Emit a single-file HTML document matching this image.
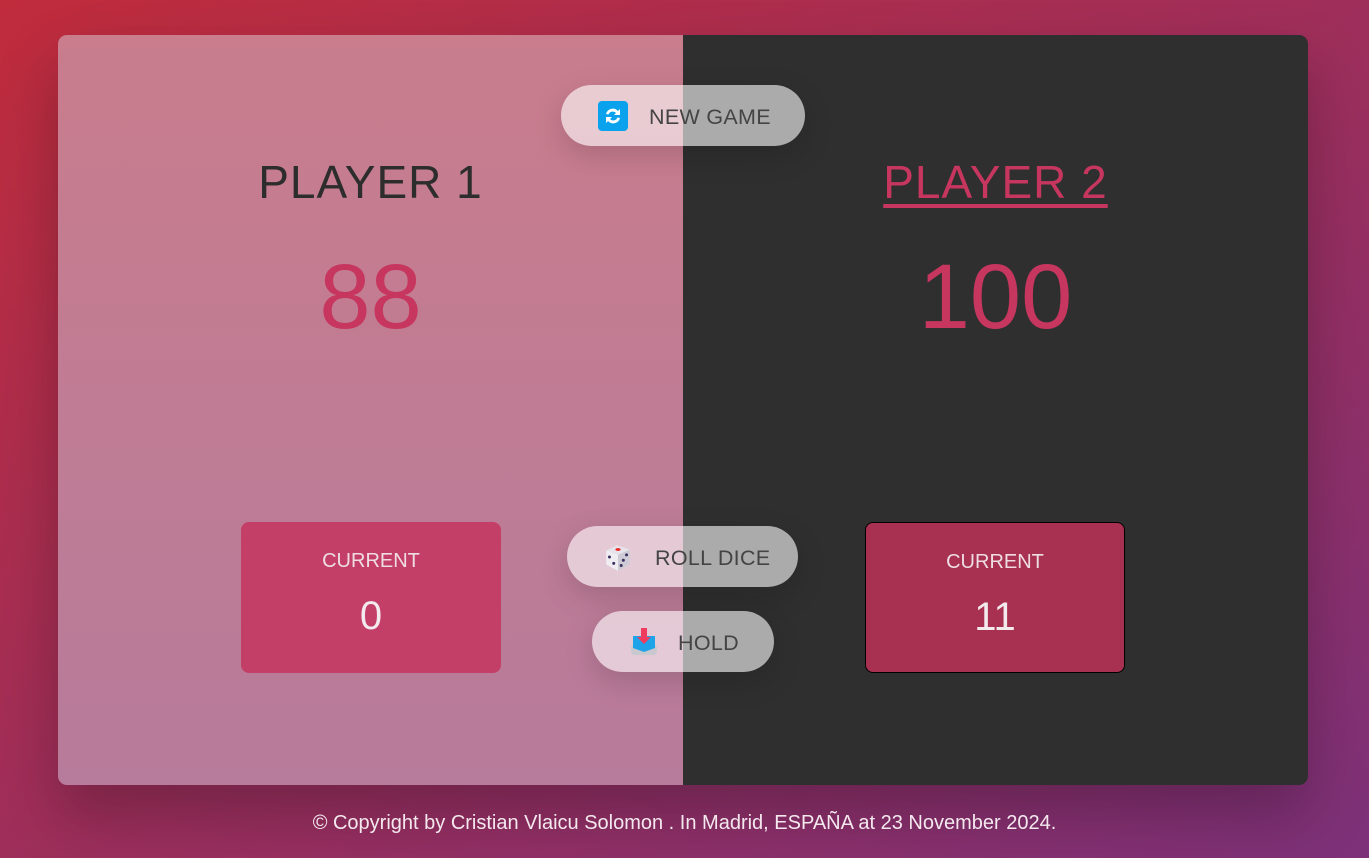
<!DOCTYPE html>
<html><head><meta charset="utf-8"><style>
*{margin:0;padding:0;box-sizing:border-box}
body{width:1369px;height:858px;overflow:hidden;font-family:"Liberation Sans",sans-serif;background:linear-gradient(to bottom right,#c02c3c,#7d3179);position:relative}
.main{position:absolute;left:58px;top:35px;width:1250px;height:750px;border-radius:9px;overflow:hidden;box-shadow:0 30px 60px rgba(0,0,0,.25);display:flex}
.p{width:50%;height:100%;position:relative;text-align:center}
.p1{background:linear-gradient(to bottom,#c97d8d,#b77b9b)}
.p2{background:#2f2f2f}
.name{position:absolute;top:120px;width:100%;font-size:46px;letter-spacing:1px;color:#2d2d2d;font-weight:300}
.p2 .name{color:#c7365f;text-decoration:underline;text-decoration-thickness:4px;text-underline-offset:6px}
.score{position:absolute;top:210px;width:100%;font-size:92px;color:#c7365f;font-weight:300}
.cur{position:absolute;left:183px;top:487px;width:260px;height:151px;border-radius:8px;background:#c43f68;color:#fff}
.p2 .cur{left:182px;background:#a83050;border:1px solid #000}
.cur .l{margin-top:28px;font-size:20px;color:#eedde3}
.cur .v{margin-top:21px;font-size:40px;color:#f3eaee}
.btn{position:absolute;height:61px;border-radius:31px;background:rgba(255,255,255,.6);box-shadow:0 10px 30px rgba(0,0,0,.15);font-size:21.5px;color:#444;display:flex;align-items:center;letter-spacing:.3px;padding-top:4px}
.btn svg{margin-top:-4px}
.foot{position:absolute;top:812px;width:100%;text-align:center;color:#f4e8ee;font-size:20px}
</style></head><body>
<div class="main">
<div class="p p1"><div class="name">PLAYER 1</div><div class="score">88</div>
<div class="cur"><div class="l">CURRENT</div><div class="v">0</div></div></div>
<div class="p p2"><div class="name">PLAYER 2</div><div class="score">100</div>
<div class="cur"><div class="l">CURRENT</div><div class="v">11</div></div></div>
</div>
<div class="btn" style="left:561px;top:85px;width:244px">
<svg style="margin-left:37px" width="30" height="30" viewBox="0 0 30 30"><rect width="30" height="30" rx="4" fill="#0aa2ec"/><path d="M8 13a7 7 0 0 1 12-3l2-2v6h-6l2-2a4.5 4.5 0 0 0-7.5 1.5z M22 17a7 7 0 0 1-12 3l-2 2v-6h6l-2 2a4.5 4.5 0 0 0 7.5-1.5z" fill="#fff"/></svg>
<span style="margin-left:21px">NEW GAME</span></div>
<div class="btn" style="left:567px;top:526px;width:231px">
<svg style="margin-left:35px" width="32" height="32" viewBox="0 0 30 30"><path d="M4 9l10-5 12 4v14l-11 6-11-6z" fill="#e6e3ea"/><path d="M15 13l11-5v14l-11 6z" fill="#cfcbd6"/><path d="M4 9l11 4v15l-11-6z" fill="#efedf2"/><ellipse cx="15" cy="8" rx="2.5" ry="1.3" fill="#e22"/><circle cx="7" cy="15" r="1.4" fill="#3a3060"/><circle cx="11" cy="21" r="1.4" fill="#3a3060"/><circle cx="23" cy="13" r="1.4" fill="#3a3060"/><circle cx="20" cy="18" r="1.4" fill="#3a3060"/><circle cx="18" cy="23" r="1.4" fill="#3a3060"/></svg>
<span style="margin-left:21px">ROLL DICE</span></div>
<div class="btn" style="left:592px;top:611px;width:182px">
<svg style="margin-left:38px" width="28" height="30" viewBox="0 0 28 30"><rect x="1" y="18" width="26" height="10" rx="3" fill="#c8c8ce"/><path d="M3 9h22v12l-11 4-11-4z" fill="#1ea3e8"/><path d="M11 1h6v9h4l-7 7-7-7h4z" fill="#ef3b5e"/></svg>
<span style="margin-left:20px">HOLD</span></div>
<div class="foot">© Copyright by Cristian Vlaicu Solomon . In Madrid, ESPAÑA at 23 November 2024.</div>
</body></html>
